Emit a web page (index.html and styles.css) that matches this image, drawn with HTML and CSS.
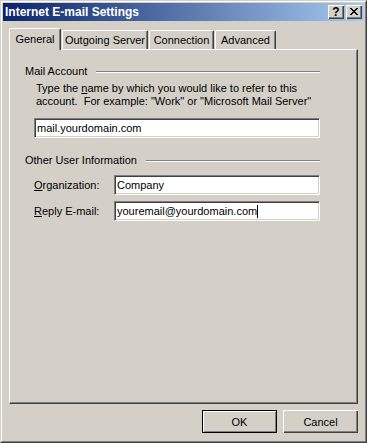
FILE: index.html
```html
<!DOCTYPE html>
<html lang="en">
<head>
    <meta charset="UTF-8">
    <meta name="viewport" content="width=device-width, initial-scale=1.0">
    <title>Internet E-mail Settings</title>
    <link rel="stylesheet" href="styles.css">
</head>
<body>

    <div class="window">
        <div class="frame">

            <!-- Title bar -->
            <div class="titlebar">
                <span class="title">Internet E-mail Settings</span>
                <div class="caption-buttons">
                    <span class="cap-btn help">?</span>
                    <span class="cap-btn close">
                        <svg width="8" height="7" viewBox="0 0 8 7" shape-rendering="crispEdges">
                            <path d="M0 0h2v1h-2z M6 0h2v1h-2z M1 1h2v1h-2z M5 1h2v1h-2z M2 2h4v1h-4z M3 3h2v1h-2z M2 4h4v1h-4z M1 5h2v1h-2z M5 5h2v1h-2z M0 6h2v1h-2z M6 6h2v1h-2z" fill="#000"/>
                        </svg>
                    </span>
                </div>
            </div>

            <div class="dialog">
                <!-- Tabs -->
                <div class="tabs">
                    <div class="tab tab-general selected">General</div>
                    <div class="tab tab-outgoing">Outgoing Server</div>
                    <div class="tab tab-connection">Connection</div>
                    <div class="tab tab-advanced">Advanced</div>
                </div>

                <div class="panel">
                    <!-- Mail Account -->
                    <div class="group-title">
                        <span>Mail Account</span>
                        <span class="etched"></span>
                    </div>
                    <div class="group-body">
                        <p class="desc">Type the <u>n</u>ame by which you would like to refer to this<br>account.&nbsp; For example: "Work" or "Microsoft Mail Server"</p>
                        <div class="textbox">mail.yourdomain.com</div>
                    </div>

                    <!-- Other User Information -->
                    <div class="group-title group-other">
                        <span>Other User Information</span>
                        <span class="etched"></span>
                    </div>
                    <div class="group-body">
                        <div class="field-row">
                            <label><u>O</u>rganization:</label>
                            <div class="textbox">Company</div>
                        </div>
                        <div class="field-row">
                            <label><u>R</u>eply E-mail:</label>
                            <div class="textbox">youremail@yourdomain.com<span class="caret"></span></div>
                        </div>
                    </div>
                </div>

                <!-- Dialog buttons -->
                <div class="buttons">
                    <button class="btn default">OK</button>
                    <button class="btn">Cancel</button>
                </div>
            </div>

        </div>
    </div>

</body>
</html>
```

FILE: styles.css
```css
/* General Styling */
body {
    margin: 0;
    background-color: #d4d0c8;
    font-family: "Liberation Sans", Arial, sans-serif;
    font-size: 11px;
    color: #000;
}

.window {
    width: 367px;
    height: 443px;
    box-sizing: border-box;
    border: 1px solid;
    border-color: #d4d0c8 #404040 #404040 #d4d0c8;
}

.frame {
    height: 100%;
    box-sizing: border-box;
    border: 1px solid;
    border-color: #ffffff #808080 #808080 #ffffff;
    padding: 1px;
    display: flex;
    flex-direction: column;
}

/* Title bar */
.titlebar {
    height: 18px;
    display: flex;
    align-items: center;
    justify-content: space-between;
    padding: 0 2px;
    background: linear-gradient(to right, #0a246a, #a6caf0);
}

.title {
    color: #fff;
    font-weight: bold;
    font-size: 12px;
    line-height: 18px;
}

.caption-buttons {
    display: flex;
    gap: 2px;
}

.cap-btn {
    width: 16px;
    height: 14px;
    box-sizing: border-box;
    display: flex;
    align-items: center;
    justify-content: center;
    background-color: #d4d0c8;
    box-shadow: inset 1px 1px #fff, inset -1px -1px #404040, inset -2px -2px #808080;
}

.cap-btn.help {
    font-weight: bold;
    font-size: 12px;
    line-height: 14px;
    padding-bottom: 1px;
}

.cap-btn.close svg {
    display: block;
    margin-top: -1px;
}

/* Dialog body */
.dialog {
    flex: 1;
    padding: 7px 6px 0 6px;
    display: flex;
    flex-direction: column;
}

.tabs {
    height: 21px;
    display: flex;
    align-items: flex-end;
    gap: 1px;
}

.tab {
    height: 19px;
    box-sizing: border-box;
    border: 1px solid;
    border-bottom: none;
    border-color: #fff #404040 #fff #fff;
    border-radius: 2px 2px 0 0;
    box-shadow: inset -1px 0 #808080;
    text-align: center;
    line-height: 16px;
    padding-top: 1px;
    white-space: nowrap;
}

.tab.selected {
    height: 22px;
    margin-bottom: -1px;
    position: relative;
    z-index: 1;
    background-color: #d4d0c8;
    line-height: 16px;
    padding-top: 2px;
}

.tab-general { width: 52px; }
.tab-outgoing { width: 86px; }
.tab-connection { width: 65px; }
.tab-advanced { width: 61px; }

.panel {
    height: 355px;
    box-sizing: border-box;
    border: 1px solid;
    border-color: #fff #404040 #404040 #fff;
    box-shadow: inset -1px -1px #808080;
    padding: 15px 37px 0 15px;
}

.group-title {
    display: flex;
    align-items: flex-start;
    gap: 9px;
    line-height: 13px;
}

.etched {
    flex: 1;
    margin-top: 6px;
    border-top: 1px solid #808080;
    border-bottom: 1px solid #fff;
}

.group-other {
    margin-top: 16px;
}

.group-body {
    padding-left: 9px;
}

.desc {
    margin: 4px 0 10px 2px;
    line-height: 13px;
}

.textbox {
    height: 20px;
    box-sizing: border-box;
    background-color: #fff;
    border: 1px solid;
    border-color: #808080 #fff #fff #808080;
    box-shadow: inset 1px 1px #404040, inset -1px -1px #d4d0c8;
    padding: 0 2px;
    line-height: 18px;
    white-space: nowrap;
    display: flex;
    align-items: center;
}

.caret {
    display: inline-block;
    width: 1px;
    height: 13px;
    background-color: #000;
}

.field-row {
    display: flex;
    align-items: center;
    margin-top: 6px;
}

.group-other + .group-body .field-row:first-child {
    margin-top: 8px;
}

.field-row label {
    width: 80px;
}

.field-row .textbox {
    flex: 1;
}

/* Dialog buttons */
.buttons {
    display: flex;
    justify-content: flex-end;
    gap: 6px;
    margin-top: 6px;
}

.btn {
    width: 75px;
    height: 23px;
    padding: 0;
    border: none;
    background-color: #d4d0c8;
    font-family: inherit;
    font-size: 11px;
    color: #000;
    box-shadow: inset 1px 1px #fff, inset -1px -1px #404040, inset -2px -2px #808080;
}

.btn.default {
    border: 1px solid #000;
    box-shadow: inset 1px 1px #fff, inset -1px -1px #808080;
}
```
